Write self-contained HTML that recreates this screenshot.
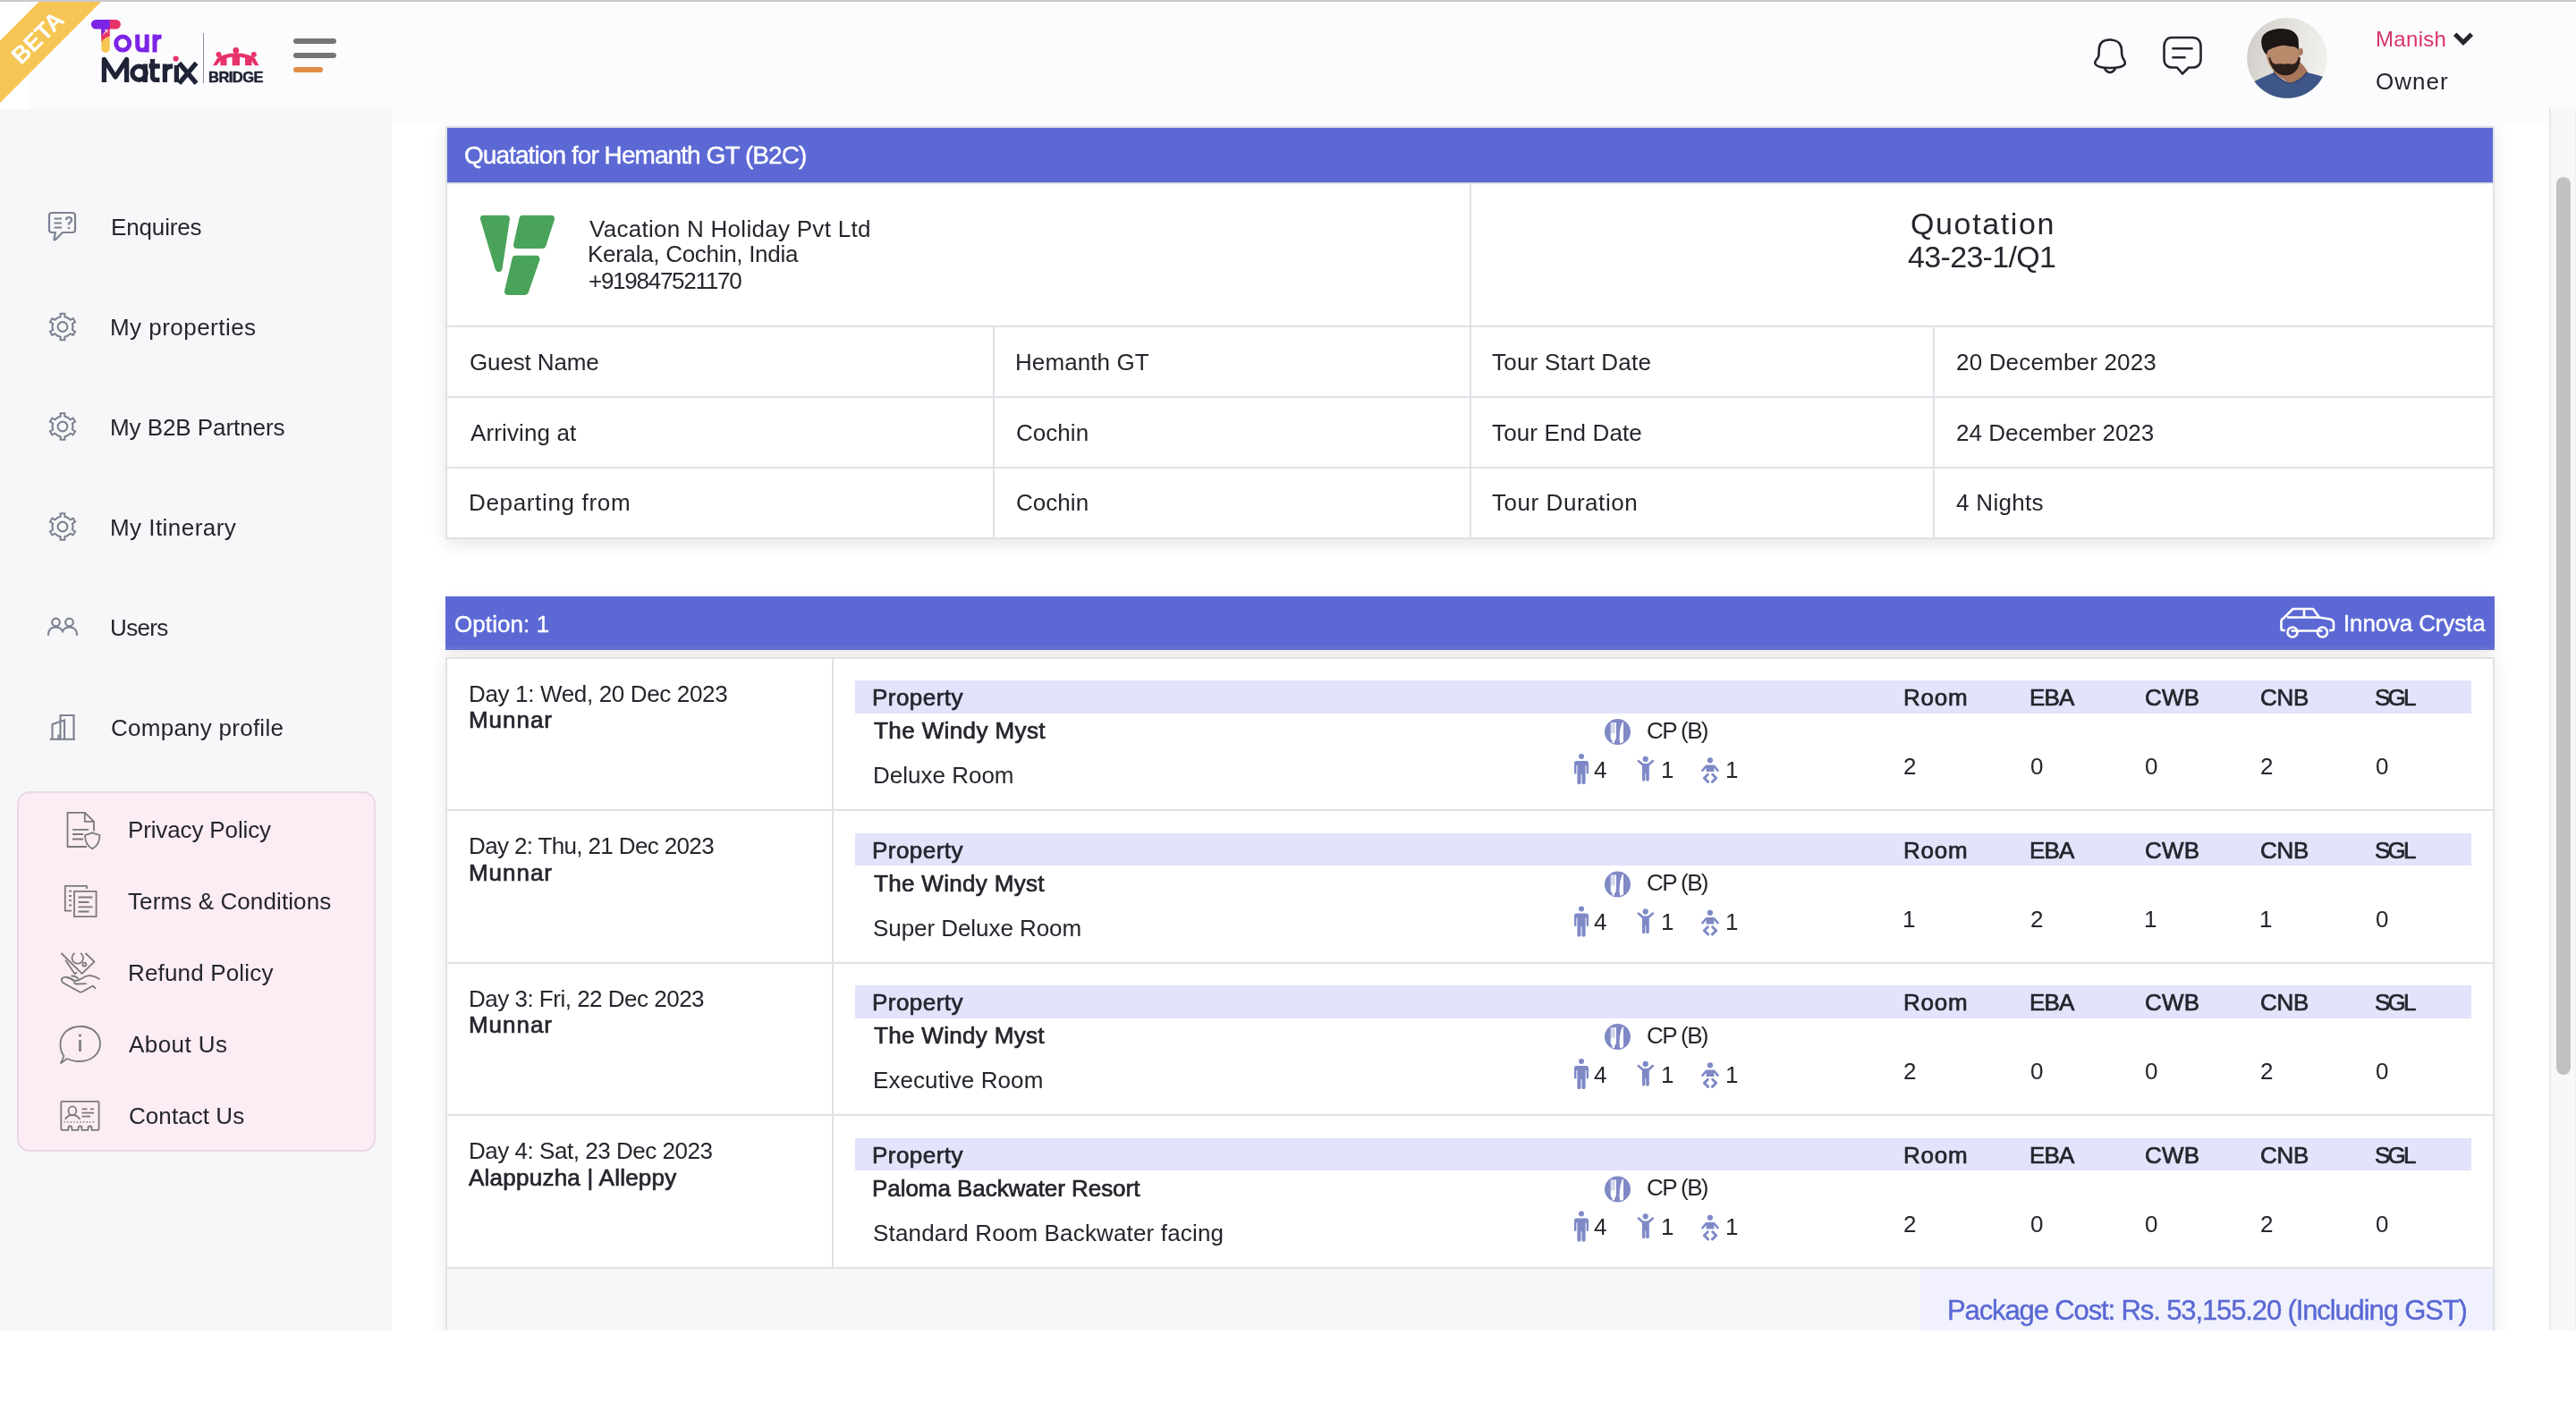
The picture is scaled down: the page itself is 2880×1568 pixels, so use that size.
<!DOCTYPE html><html><head><meta charset="utf-8"><title>Tour Matrix - Quotation</title><style>
html,body{margin:0;padding:0;width:2880px;height:1568px;overflow:hidden;background:#fff;font-family:"Liberation Sans",sans-serif;}
.t{position:absolute;line-height:0;white-space:nowrap;will-change:transform;}
svg text{font-family:"Liberation Sans",sans-serif;}
</style></head><body>
<div style="position:absolute;left:0px;top:0px;width:2880px;height:2px;background:#c8cacd;"></div>
<div style="position:absolute;left:0px;top:2px;width:2880px;height:120px;background:#fcfcfe;"></div>
<div style="position:absolute;left:0px;top:122px;width:438px;height:1366px;background:#f7f7f9;"></div>
<div style="position:absolute;left:2850px;top:121px;width:30px;height:1367px;background:#f8f8f8;box-sizing:border-box;border-left:2px solid #e8e8e8;border-right:1px solid #efefef;"></div>
<div style="position:absolute;left:2858px;top:198px;width:16px;height:1004px;background:#c1c1c1;border-radius:8px;"></div>
<div style="position:absolute;left:0px;top:2px;width:32px;height:120px;background:#ffffff;"></div>
<svg style="position:absolute;left:0px;top:2px;overflow:visible;overflow:hidden;" width="200" height="120" viewBox="0 0 200 120"><polygon points="43.5,0 113,0 0,113 0,43.5" fill="#f5c653"/><text x="42.4" y="49" transform="rotate(-45 42.4 40.4)" text-anchor="middle" font-size="26.5" font-weight="700" fill="#fff" letter-spacing="0">BETA</text></svg>
<svg style="position:absolute;left:0px;top:0px;overflow:visible;" width="300" height="122" viewBox="0 0 300 122">
<path d="M107.2 21.9 H123 V32.5 H107.2 A5.3 5.3 0 0 1 107.2 21.9 Z" fill="#7b24e6"/>
<path d="M122.7 21.9 H129.6 A5.3 5.3 0 0 1 129.6 32.5 H122.7 Z" fill="#e8336a"/>
<path d="M113.3 32 H122.7 V54.3 A4.7 4.7 0 0 1 113.3 54.3 Z" fill="#f5c451"/>
<path d="M113.3 32 H122.7 V40.5 Q116 42 113.3 47 Z" fill="#e8336a"/>
<path d="M113.3 32 H120.5 Q117 35 113.3 40 Z" fill="#7b24e6"/>
<path d="M115.5 38.5 L119.8 33.6 M117 33.8 H119.9 V36.6" stroke="#fcfcfe" stroke-width="1" fill="none"/>
<g fill="none" stroke="#7b24e6" stroke-width="5">
<circle cx="137.2" cy="48.6" r="7.5"/>
<path d="M153.7 38.6 V50.5 Q153.7 56.1 159 56.1 Q164.2 56.1 164.2 50.5 M164.2 38.6 V58.6"/>
<path d="M173 38.6 V58.6 M173 47.5 Q173.5 41 180.6 41"/>
</g>
<g fill="none" stroke="#1f2336" stroke-width="5.3" stroke-linejoin="round">
<path d="M116.4 92 V66.5 L129 86 L141.6 66.5 V92"/>
<circle cx="155.6" cy="81.7" r="7.6"/>
<path d="M162.3 71.5 V92"/>
<path d="M170.5 66 V85.5 Q170.5 89.4 174.5 89.4 H178.5 M166.5 74 H178.8"/>
<path d="M184.4 71.5 V92 M184.4 80.5 Q185 74 193.2 74"/>
<path d="M197.4 73 V92"/>
<path d="M202 72.5 L217.8 91.2 M217.8 72.5 L202 91.2" stroke-linecap="square"/>
</g>
<circle cx="196.6" cy="65.6" r="3.1" fill="#e8336a"/>
</svg>
<div style="position:absolute;left:226.8px;top:37.4px;width:1.6px;height:55.4px;background:#8a8fa0;"></div>
<div class="t" style="left:233.40px;top:85.82px;font-size:16.5px;color:#1f2336;font-weight:700;letter-spacing:-0.520px;-webkit-text-stroke:0.5px #1f2336;">BRIDGE</div>
<svg style="position:absolute;left:0px;top:0px;overflow:visible;" width="300" height="122" viewBox="0 0 300 122">
<g fill="#e8336a">
<circle cx="263.8" cy="56.5" r="3.4"/>
<path d="M259.6 60.5 H268 V73.3 H259.6 Z"/>
<circle cx="244.5" cy="61" r="3"/>
<circle cx="283.8" cy="61" r="3"/>
<path d="M238 73.3 L243 65 Q252 59 263.8 59.5 Q276 59 285 65 L289.5 73.3 L285 73.3 L281.5 68 L281.5 73.3 L274 73.3 L274 65 Q264 61.5 253.5 65 L253.5 73.3 L246.5 73.3 L246.5 68 L242 73.3 Z"/>
</g></svg>
<div style="position:absolute;left:328.4px;top:43.2px;width:47.4px;height:6.2px;background:#757575;border-radius:3.1px;"></div>
<div style="position:absolute;left:328.4px;top:59px;width:47.4px;height:6.2px;background:#757575;border-radius:3.1px;"></div>
<div style="position:absolute;left:328.4px;top:74.8px;width:32.2px;height:6px;background:#e08b46;border-radius:3px;"></div>
<svg style="position:absolute;left:0px;top:0px;overflow:visible;" width="2880" height="122" viewBox="0 0 2880 122"><g fill="none" stroke="#24252d" stroke-width="2.6" stroke-linejoin="round" stroke-linecap="round">
<path d="M2342.5 71.5 C2341 69.5 2344.5 66.5 2346 63.5 C2347 61 2346.5 57 2346.8 54 C2347.5 47 2352 44.5 2359 44.5 C2366 44.5 2371 48 2371.8 54 C2372.2 57 2371.8 61 2372.8 63.5 C2374 66.5 2377 69.5 2375.5 72 C2373 75.5 2366 76 2359 76 C2352 76 2344.5 75.5 2342.5 71.5 Z"/>
<path d="M2353 76.5 C2355 80 2357 81 2359 81 C2361 81 2363 80 2365 76.5"/>
</g><path d="M2355 45 Q2359 41.5 2363 45 Z" fill="#24252d"/></svg>
<svg style="position:absolute;left:0px;top:0px;overflow:visible;" width="2880" height="122" viewBox="0 0 2880 122"><g fill="none" stroke="#24252d" stroke-width="2.6" stroke-linejoin="round" stroke-linecap="round">
<path d="M2428 42 H2451 C2457 42 2460.5 46 2460.5 52 V66 C2460.5 72 2457 75.5 2451 75.5 H2447 L2440 82.5 L2434 75.5 H2429 C2423 75.5 2419.5 72 2419.5 66 V52 C2419.5 46 2423 42 2428 42 Z"/>
<path d="M2429.5 54.2 H2450.5"/><path d="M2429.5 64.2 H2442.5"/>
</g></svg>
<svg style="position:absolute;left:0px;top:0px;overflow:visible;" width="2880" height="122" viewBox="0 0 2880 122"><defs><clipPath id="avc"><circle cx="730" cy="700" r="630"/></clipPath>
<linearGradient id="avbg" x1="0" y1="0" x2="1" y2="0.2"><stop offset="0" stop-color="#cdcac4"/><stop offset="0.6" stop-color="#e6e4e0"/><stop offset="1" stop-color="#f2f1ee"/></linearGradient></defs>
<g transform="translate(2505 15) scale(0.07133)"><g clip-path="url(#avc)">
<rect x="0" y="0" width="1472" height="1402" fill="url(#avbg)"/>
<path d="M500 900 Q600 1000 780 1100 Q950 1040 1060 925 Q1000 820 930 760 L800 850 Z" fill="#a77559"/>
<path d="M410 560 Q560 470 760 470 Q880 480 915 560 L935 720 Q930 900 760 950 Q650 975 560 930 Q420 820 400 640 Z" fill="#b9896b"/>
<ellipse cx="945" cy="600" rx="32" ry="58" fill="#a97a5e"/>
<path d="M440 690 Q470 880 600 950 Q700 990 800 955 Q930 885 938 690 L905 690 Q885 790 810 795 Q740 780 690 795 Q630 780 560 795 Q480 790 468 690 Z" fill="#2a1f1a"/>
<path d="M325 440 Q330 270 600 240 Q860 230 905 400 L915 580 Q880 520 800 520 Q760 520 700 500 Q560 500 430 580 L405 650 Q325 560 325 440 Z" fill="#1c1715"/>
<path d="M120 1120 Q250 1040 520 930 Q650 1080 780 1100 Q950 1060 1040 925 Q1200 960 1340 1010 L1500 1450 L0 1450 Z" fill="#3e5688"/>
<path d="M520 930 Q650 1080 780 1100 Q950 1060 1040 925" fill="none" stroke="#33466f" stroke-width="22"/>
</g></g></svg>
<div class="t" style="left:2655.80px;top:43.60px;font-size:24px;color:#d9336b;font-weight:400;letter-spacing:0.320px;">Manish</div>
<svg style="position:absolute;left:0px;top:0px;overflow:visible;" width="2880" height="122" viewBox="0 0 2880 122"><path d="M2746.5 40 L2754 47.5 L2761.5 40" fill="none" stroke="#26272e" stroke-width="5" stroke-linecap="square"/></svg>
<div class="t" style="left:2656.00px;top:90.90px;font-size:26px;color:#25262d;font-weight:400;letter-spacing:1.000px;">Owner</div>
<div class="t" style="left:123.60px;top:254.00px;font-size:26px;color:#25262d;font-weight:400;letter-spacing:-0.143px;">Enquires</div>
<div class="t" style="left:123.00px;top:366.40px;font-size:26px;color:#25262d;font-weight:400;letter-spacing:0.466px;">My properties</div>
<div class="t" style="left:123.00px;top:478.40px;font-size:26px;color:#25262d;font-weight:400;letter-spacing:-0.071px;">My B2B Partners</div>
<div class="t" style="left:123.00px;top:590.40px;font-size:26px;color:#25262d;font-weight:400;letter-spacing:0.455px;">My Itinerary</div>
<div class="t" style="left:122.80px;top:701.90px;font-size:26px;color:#25262d;font-weight:400;letter-spacing:-0.650px;">Users</div>
<div class="t" style="left:123.80px;top:813.70px;font-size:26px;color:#25262d;font-weight:400;letter-spacing:0.256px;">Company profile</div>
<svg style="position:absolute;left:0px;top:0px;overflow:visible;" width="438" height="900" viewBox="0 0 438 900"><g fill="none" stroke="#7c8291" stroke-width="2.2" stroke-linejoin="round">
<path d="M58 238 H81 Q84 238 84 241 V257 Q84 260 81 260 H70 L62 268 Q60 269 60.5 267 L62 260 H58 Q55 260 55 257 V241 Q55 238 58 238 Z"/>
<path d="M60.5 244.5 H69 M60.5 249.5 H69 M60.5 254.5 H69"/>
<path d="M74 246 Q74 243 77 243 Q80 243 80 246 Q80 248.5 77 249.5 V251.5"/>
</g><circle cx="77" cy="255" r="1.3" fill="#7c8291"/><g fill="none" stroke="#7c8291" stroke-width="2.1" stroke-linejoin="miter"><path d="M64.25 355.54 L67.61 354.25 L67.65 350.68 L72.35 350.68 L72.39 354.25 L75.75 355.54 L78.55 357.80 L81.66 356.06 L84.00 360.12 L80.94 361.95 L81.50 365.50 L80.94 369.05 L84.00 370.88 L81.66 374.94 L78.55 373.20 L75.75 375.46 L72.39 376.75 L72.35 380.32 L67.65 380.32 L67.61 376.75 L64.25 375.46 L61.45 373.20 L58.34 374.94 L56.00 370.88 L59.06 369.05 L58.50 365.50 L59.06 361.95 L56.00 360.12 L58.34 356.06 L61.45 357.80 Z"/><circle cx="70" cy="365.5" r="5.4"/></g><g fill="none" stroke="#7c8291" stroke-width="2.1" stroke-linejoin="miter"><path d="M64.25 467.04 L67.61 465.75 L67.65 462.18 L72.35 462.18 L72.39 465.75 L75.75 467.04 L78.55 469.30 L81.66 467.56 L84.00 471.62 L80.94 473.45 L81.50 477.00 L80.94 480.55 L84.00 482.38 L81.66 486.44 L78.55 484.70 L75.75 486.96 L72.39 488.25 L72.35 491.82 L67.65 491.82 L67.61 488.25 L64.25 486.96 L61.45 484.70 L58.34 486.44 L56.00 482.38 L59.06 480.55 L58.50 477.00 L59.06 473.45 L56.00 471.62 L58.34 467.56 L61.45 469.30 Z"/><circle cx="70" cy="477" r="5.4"/></g><g fill="none" stroke="#7c8291" stroke-width="2.1" stroke-linejoin="miter"><path d="M64.25 579.04 L67.61 577.75 L67.65 574.18 L72.35 574.18 L72.39 577.75 L75.75 579.04 L78.55 581.30 L81.66 579.56 L84.00 583.62 L80.94 585.45 L81.50 589.00 L80.94 592.55 L84.00 594.38 L81.66 598.44 L78.55 596.70 L75.75 598.96 L72.39 600.25 L72.35 603.82 L67.65 603.82 L67.61 600.25 L64.25 598.96 L61.45 596.70 L58.34 598.44 L56.00 594.38 L59.06 592.55 L58.50 589.00 L59.06 585.45 L56.00 583.62 L58.34 579.56 L61.45 581.30 Z"/><circle cx="70" cy="589" r="5.4"/></g><g fill="none" stroke="#7c8291" stroke-width="2.2" stroke-linecap="round">
<circle cx="62.5" cy="696" r="4.3"/><circle cx="77.5" cy="696" r="4.3"/>
<path d="M54 710 Q54 701.5 62.5 701.5 Q68 701.5 70 706 Q72 701.5 77.5 701.5 Q86 701.5 86 710"/></g><g fill="none" stroke="#7c8291" stroke-width="2.1">
<path d="M67.5 826.5 V800 H82.5 V826.5"/><path d="M58.5 826.5 V810 L72 805.5 V826.5"/>
<path d="M55.8 826.8 H84"/><path d="M65.5 826.5 V821.5"/></g></svg>
<div style="position:absolute;left:18.8px;top:884.5px;width:401px;height:403px;background:#fcecf4;box-sizing:border-box;border:2px solid #ead9e3;border-radius:14px;"></div>
<div class="t" style="left:143.00px;top:927.90px;font-size:26px;color:#25262d;font-weight:400;letter-spacing:-0.137px;">Privacy Policy</div>
<div class="t" style="left:143.30px;top:1007.90px;font-size:26px;color:#25262d;font-weight:400;letter-spacing:0.107px;">Terms &amp; Conditions</div>
<div class="t" style="left:143.00px;top:1087.90px;font-size:26px;color:#25262d;font-weight:400;letter-spacing:0.166px;">Refund Policy</div>
<div class="t" style="left:143.90px;top:1167.90px;font-size:26px;color:#25262d;font-weight:400;letter-spacing:0.429px;">About Us</div>
<div class="t" style="left:143.70px;top:1247.90px;font-size:26px;color:#25262d;font-weight:400;letter-spacing:0.065px;">Contact Us</div>
<svg style="position:absolute;left:0px;top:0px;overflow:visible;" width="438" height="1300" viewBox="0 0 438 1300"><g fill="none" stroke="#7a7a7a" stroke-width="1.8" stroke-linejoin="round">
<path d="M97 947 H75.5 V908.8 H95 L105 918.8 V929.5"/><path d="M94.8 908.8 V918.8 H105"/>
<path d="M81 927.8 H99 M81 933 H93 M81 938.5 H93"/>
<path d="M103.2 931.3 Q107.5 933 111.5 934 Q111.5 945 103.2 949.3 Q95 945 95 934 Q99 933 103.2 931.3 Z"/>
<path d="M80 1018.6 H72.8 V990.8 H97 V994"/><path d="M77 996.6 H80 M77 1002 H80 M77 1007.2 H80 M77 1012.5 H80"/>
<path d="M83 996.8 H107.6 V1025.2 H83 Z"/>
<path d="M87.5 1003.5 H103.5 M87.5 1009 H99.5 M87.5 1014.3 H103.5 M87.5 1019.5 H99.5"/>
<path d="M68.4 1066 L91.6 1088.8 L105.5 1075.6 L95.5 1066"/>
<path d="M83.5 1066 A6.3 6.3 0 1 0 90.1 1066"/><circle cx="94.3" cy="1078.6" r="2"/>
<path d="M73.2 1073.8 L83.6 1089.2 L86 1087.6"/>
<path d="M111.5 1095.3 Q104 1090.5 98 1091.3 Q94 1092 91.5 1094.3 Q89 1096.5 84 1097"/>
<path d="M84 1097 Q78 1094 74 1093 Q70 1092.5 68.8 1095 Q68.4 1097.5 71 1099.5 L89.2 1109.5 Q90.5 1110 92 1109.3 L102 1103.5 Q103.5 1102.5 105 1103.5 L107 1106"/>
<path d="M82.8 1097.5 Q83 1100.3 85 1100.5 L96.7 1100.2"/>
<path d="M74 1093 Q79 1093 82.5 1097.2 M79.5 1091.5 Q84.5 1091.2 88 1095"/>
<path d="M90 1148 C104 1148 112 1157 112 1167 C112 1178 103 1187 89 1187 C83 1187 79 1186 75 1184 L68 1189 L71.5 1181 C69 1178 67.5 1173 67.5 1168 C67.5 1157 76 1148 90 1148 Z"/>
<path d="M89.5 1163 V1176" stroke-width="2.6"/>
<path d="M69.3 1231.8 H109.6 Q110.6 1231.8 110.6 1232.8 V1262.8 Q110.6 1263.8 109.6 1263.8 H102.5 V1261.5 A2 2 0 0 0 98.5 1261.5 V1263.8 H91.5 V1261.5 A2 2 0 0 0 87.5 1261.5 V1263.8 H80.4 V1261.5 A2 2 0 0 0 76.4 1261.5 V1263.8 H69.3 Q68.3 1263.8 68.3 1262.8 V1232.8 Q68.3 1231.8 69.3 1231.8 Z"/>
<ellipse cx="80.9" cy="1242.3" rx="4.4" ry="5"/><path d="M72.8 1251.8 Q76 1247 80.9 1247 Q86 1247 89.5 1251.8"/>
<path d="M91.5 1240.4 H97.5 M101 1240.4 H105 M91.5 1244.6 H105 M91.5 1248.6 H101"/>
<path d="M71.5 1254.8 H107.5" stroke-dasharray="1.2 2.4"/>
</g><circle cx="89.5" cy="1158" r="1.6" fill="#7a7a7a"/></svg>
<div style="position:absolute;left:498px;top:141px;width:2291px;height:462px;background:#fff;box-sizing:border-box;border:2px solid #dee2e6;box-shadow:0 5px 18px rgba(0,0,0,0.10);"></div>
<div style="position:absolute;left:500px;top:143px;width:2287px;height:61px;background:#5c69d4;"></div>
<div style="position:absolute;left:500px;top:204px;width:2287px;height:2px;background:#dee2e6;"></div>
<div class="t" style="left:519.00px;top:174.20px;font-size:28px;color:#fff;font-weight:400;-webkit-text-stroke:0.4px #fff;letter-spacing:-0.931px;">Quatation for Hemanth GT (B2C)</div>
<svg style="position:absolute;left:0px;top:0px;overflow:visible;" width="2880" height="400" viewBox="0 0 2880 400"><g fill="#4aa35b" stroke="#4aa35b" stroke-width="8" stroke-linejoin="round"><polygon points="541,244.7 566,244.7 557.6,300"/><polygon points="584.5,244.7 616,244.7 606.5,274 578,274"/><polygon points="576.5,289.8 599.5,289.8 587,326 568,326"/></g></svg>
<div class="t" style="left:659.00px;top:255.90px;font-size:26px;color:#25262d;font-weight:400;letter-spacing:0.280px;">Vacation N Holiday Pvt Ltd</div>
<div class="t" style="left:657.00px;top:284.40px;font-size:26px;color:#25262d;font-weight:400;letter-spacing:-0.300px;">Kerala, Cochin, India</div>
<div class="t" style="left:658.00px;top:313.90px;font-size:26px;color:#25262d;font-weight:400;letter-spacing:-1.265px;">+919847521170</div>
<div class="t" style="left:2136.00px;top:249.60px;font-size:34px;color:#25262d;font-weight:400;letter-spacing:1.625px;">Quotation</div>
<div class="t" style="left:2133.00px;top:287.10px;font-size:34px;color:#25262d;font-weight:400;letter-spacing:-0.667px;">43-23-1/Q1</div>
<div style="position:absolute;left:1643px;top:206px;width:2px;height:158px;background:#dee2e6;"></div>
<div style="position:absolute;left:500px;top:364px;width:2287px;height:2px;background:#dee2e6;"></div>
<div style="position:absolute;left:500px;top:443px;width:2287px;height:2px;background:#dee2e6;"></div>
<div style="position:absolute;left:500px;top:522px;width:2287px;height:2px;background:#dee2e6;"></div>
<div style="position:absolute;left:1110px;top:366px;width:2px;height:235px;background:#dee2e6;"></div>
<div style="position:absolute;left:1643px;top:366px;width:2px;height:235px;background:#dee2e6;"></div>
<div style="position:absolute;left:2161px;top:366px;width:2px;height:235px;background:#dee2e6;"></div>
<div class="t" style="left:524.60px;top:404.80px;font-size:26px;color:#25262d;font-weight:400;letter-spacing:-0.134px;">Guest Name</div>
<div class="t" style="left:1135.20px;top:404.80px;font-size:26px;color:#25262d;font-weight:400;letter-spacing:0.088px;">Hemanth GT</div>
<div class="t" style="left:1668.00px;top:404.80px;font-size:26px;color:#25262d;font-weight:400;letter-spacing:0.215px;">Tour Start Date</div>
<div class="t" style="left:2186.80px;top:404.80px;font-size:26px;color:#25262d;font-weight:400;letter-spacing:0.174px;">20 December 2023</div>
<div class="t" style="left:525.60px;top:483.60px;font-size:26px;color:#25262d;font-weight:400;letter-spacing:0.120px;">Arriving at</div>
<div class="t" style="left:1136.20px;top:483.60px;font-size:26px;color:#25262d;font-weight:400;letter-spacing:0.040px;">Cochin</div>
<div class="t" style="left:1668.00px;top:483.60px;font-size:26px;color:#25262d;font-weight:400;letter-spacing:0.134px;">Tour End Date</div>
<div class="t" style="left:2186.80px;top:483.60px;font-size:26px;color:#25262d;font-weight:400;letter-spacing:0.011px;">24 December 2023</div>
<div class="t" style="left:523.60px;top:562.40px;font-size:26px;color:#25262d;font-weight:400;letter-spacing:0.662px;">Departing from</div>
<div class="t" style="left:1136.20px;top:562.40px;font-size:26px;color:#25262d;font-weight:400;letter-spacing:0.040px;">Cochin</div>
<div class="t" style="left:1668.00px;top:562.40px;font-size:26px;color:#25262d;font-weight:400;letter-spacing:0.551px;">Tour Duration</div>
<div class="t" style="left:2186.80px;top:562.40px;font-size:26px;color:#25262d;font-weight:400;letter-spacing:0.316px;">4 Nights</div>
<div style="position:absolute;left:438px;top:122px;width:2412px;height:17px;background:#fcfcfe;"></div>
<div style="position:absolute;left:498px;top:667px;width:2291px;height:60px;background:linear-gradient(#5c69d4 0,#5c69d4 53px,#6c76d8 60px);box-shadow:0 3px 12px rgba(0,0,0,0.07);"></div>
<div class="t" style="left:508.00px;top:697.90px;font-size:26px;color:#fff;font-weight:400;-webkit-text-stroke:0.4px #fff;letter-spacing:0.074px;">Option: 1</div>
<svg style="position:absolute;left:0px;top:0px;overflow:visible;" width="2880" height="800" viewBox="0 0 2880 800"><g fill="none" stroke="#fff" stroke-width="2.6" stroke-linejoin="round"><path d="M2555 705 H2552 Q2550.5 705 2550.5 703 V695 Q2550.5 692.5 2553 691.5 L2563.5 681 H2586 L2593 690.5 L2605 692.5 Q2609 693.5 2609 697 V703 Q2609 705 2607 705 H2604"/><path d="M2561.5 705.5 H2596.5"/><path d="M2557 690.5 H2593"/><path d="M2576 681 V690.5"/><circle cx="2563" cy="707" r="5.5"/><circle cx="2596.5" cy="707" r="5.5"/></g></svg>
<div class="t" style="left:2619.80px;top:697.30px;font-size:26px;color:#fff;font-weight:400;-webkit-text-stroke:0.4px #fff;letter-spacing:-0.150px;">Innova Crysta</div>
<div style="position:absolute;left:498px;top:735px;width:2291px;height:800px;background:#fff;box-sizing:border-box;border:2px solid #dee2e6;box-shadow:0 0 18px rgba(0,0,0,0.09);"></div>
<div style="position:absolute;left:930px;top:737px;width:2px;height:681px;background:#dee2e6;"></div>
<div style="position:absolute;left:500px;top:905px;width:2287px;height:2px;background:#dee2e6;"></div>
<div style="position:absolute;left:500px;top:1075.5px;width:2287px;height:2px;background:#dee2e6;"></div>
<div style="position:absolute;left:500px;top:1246px;width:2287px;height:2px;background:#dee2e6;"></div>
<div style="position:absolute;left:500px;top:1417px;width:2287px;height:2px;background:#dee2e6;"></div>
<div style="position:absolute;left:500px;top:1419px;width:1646px;height:70px;background:#f8f8f9;"></div>
<div style="position:absolute;left:2146px;top:1419px;width:641px;height:70px;background:#f0f1fc;"></div>
<div class="t" style="left:2176.50px;top:1465.75px;font-size:31px;color:#5a68d4;font-weight:400;-webkit-text-stroke:0.4px #5a68d4;letter-spacing:-1.119px;">Package Cost: Rs. 53,155.20 (Including GST)</div>
<div class="t" style="left:524.20px;top:775.90px;font-size:26px;color:#25262d;font-weight:400;letter-spacing:-0.344px;">Day 1: Wed, 20 Dec 2023</div>
<div class="t" style="left:524.20px;top:805.40px;font-size:26px;color:#25262d;font-weight:400;-webkit-text-stroke:0.7px #25262d;letter-spacing:0.960px;">Munnar</div>
<div style="position:absolute;left:956px;top:761.2px;width:1807px;height:36.6px;background:#e2e4fb;"></div>
<div class="t" style="left:975.30px;top:780.20px;font-size:26px;color:#25262d;font-weight:400;-webkit-text-stroke:0.7px #25262d;letter-spacing:0.459px;">Property</div>
<div class="t" style="left:2127.60px;top:780.20px;font-size:26px;color:#25262d;font-weight:400;-webkit-text-stroke:0.7px #25262d;letter-spacing:0.799px;">Room</div>
<div class="t" style="left:2269.40px;top:780.20px;font-size:26px;color:#25262d;font-weight:400;-webkit-text-stroke:0.7px #25262d;letter-spacing:-0.900px;">EBA</div>
<div class="t" style="left:2397.60px;top:780.20px;font-size:26px;color:#25262d;font-weight:400;-webkit-text-stroke:0.7px #25262d;letter-spacing:0.200px;">CWB</div>
<div class="t" style="left:2526.60px;top:780.20px;font-size:26px;color:#25262d;font-weight:400;-webkit-text-stroke:0.7px #25262d;letter-spacing:-0.300px;">CNB</div>
<div class="t" style="left:2655.10px;top:780.20px;font-size:26px;color:#25262d;font-weight:400;-webkit-text-stroke:0.7px #25262d;letter-spacing:-2.800px;">SGL</div>
<div class="t" style="left:977.30px;top:817.40px;font-size:26px;color:#25262d;font-weight:400;-webkit-text-stroke:0.7px #25262d;letter-spacing:0.401px;">The Windy Myst</div>
<div class="t" style="left:975.50px;top:867.40px;font-size:26px;color:#25262d;font-weight:400;letter-spacing:0.000px;">Deluxe Room</div>
<div class="t" style="left:2127.90px;top:857.00px;font-size:26px;color:#25262d;font-weight:400;letter-spacing:4.000px;">2</div>
<div class="t" style="left:2269.70px;top:857.00px;font-size:26px;color:#25262d;font-weight:400;letter-spacing:-4.000px;">0</div>
<div class="t" style="left:2397.60px;top:857.00px;font-size:26px;color:#25262d;font-weight:400;letter-spacing:-4.000px;">0</div>
<div class="t" style="left:2527.30px;top:857.00px;font-size:26px;color:#25262d;font-weight:400;letter-spacing:4.000px;">2</div>
<div class="t" style="left:2655.50px;top:857.00px;font-size:26px;color:#25262d;font-weight:400;letter-spacing:-4.000px;">0</div>
<div class="t" style="left:1841.00px;top:816.90px;font-size:26px;color:#25262d;font-weight:400;letter-spacing:-1.600px;">CP (B)</div>
<div class="t" style="left:1782.00px;top:860.90px;font-size:26px;color:#25262d;font-weight:400;letter-spacing:0.000px;">4</div>
<div class="t" style="left:1857.00px;top:860.90px;font-size:26px;color:#25262d;font-weight:400;letter-spacing:-32.000px;">1</div>
<div class="t" style="left:1929.00px;top:860.90px;font-size:26px;color:#25262d;font-weight:400;letter-spacing:-32.000px;">1</div>
<svg style="position:absolute;left:0px;top:0px;overflow:visible;" width="2880" height="1568" viewBox="0 0 2880 1568"><g transform="translate(0 0.0)"><circle cx="1808.5" cy="818.4" r="14.5" fill="#7f89c6"/><path d="M1800.7 808 H1806.9 V825 Q1806.5 827.5 1805 829 V831 H1802.6 V828.6 Q1800.9 827 1800.7 825 Z" fill="#fff"/><path d="M1802.1 808 V820 M1804.5 808 V820" stroke="#a9aedb" stroke-width="1.1"/><path d="M1815 807.3 V829.8 Q1813.6 831.2 1811.2 831.2 L1810.5 826 Q1810.8 814 1813.6 808 Z" fill="#fff"/><g fill="#7f89c6"><circle cx="1768" cy="846" r="3"/><path d="M1762.5 851 Q1760 851 1760 853.5 V864.5 Q1760 865.5 1761.2 865.5 Q1762.4 865.5 1762.4 864.5 V856 H1763.4 V875.5 Q1763.4 877.3 1765.5 877.3 Q1767.5 877.3 1767.5 875.5 V866 H1768.5 V875.5 Q1768.5 877.3 1770.5 877.3 Q1772.6 877.3 1772.6 875.5 V856 H1773.6 V864.5 Q1773.6 865.5 1774.8 865.5 Q1776 865.5 1776 864.5 V853.5 Q1776 851 1773.5 851 Z"/><circle cx="1839.7" cy="848.9" r="3.1"/><path d="M1830.2 851.2 L1836 856.5 V872 Q1836 873.8 1837.6 873.8 Q1839.4 873.8 1839.4 872 V865 H1840.2 V872 Q1840.2 873.8 1842 873.8 Q1843.8 873.8 1843.8 872 V856.5 L1849.5 851.2 L1847.8 849.4 L1842.3 854 H1837.3 L1831.8 849.4 Z"/><circle cx="1911.9" cy="850.3" r="3.1"/><path d="M1908 855.4 H1916 Q1917 855.4 1917.5 856.3 L1921.7 861 Q1922.3 862.2 1921.2 862.8 Q1920.3 863.3 1919.5 862.4 L1916.3 858.8 V862.9 H1907.6 V858.8 L1904.4 862.4 Q1903.6 863.3 1902.7 862.8 Q1901.6 862.2 1902.3 861 L1906.5 856.3 Q1907 855.4 1908 855.4 Z"/><path d="M1909.3 866.3 L1905.3 870.2 L1909.6 874.4 M1914.7 866.3 L1918.7 870.2 L1914.4 874.4" fill="none" stroke="#7f89c6" stroke-width="3" stroke-linecap="round" stroke-linejoin="round"/></g></g></svg>
<div class="t" style="left:524.20px;top:946.40px;font-size:26px;color:#25262d;font-weight:400;letter-spacing:-0.636px;">Day 2: Thu, 21 Dec 2023</div>
<div class="t" style="left:524.20px;top:975.90px;font-size:26px;color:#25262d;font-weight:400;-webkit-text-stroke:0.7px #25262d;letter-spacing:0.960px;">Munnar</div>
<div style="position:absolute;left:956px;top:931.7px;width:1807px;height:36.6px;background:#e2e4fb;"></div>
<div class="t" style="left:975.30px;top:950.70px;font-size:26px;color:#25262d;font-weight:400;-webkit-text-stroke:0.7px #25262d;letter-spacing:0.459px;">Property</div>
<div class="t" style="left:2127.60px;top:950.70px;font-size:26px;color:#25262d;font-weight:400;-webkit-text-stroke:0.7px #25262d;letter-spacing:0.799px;">Room</div>
<div class="t" style="left:2269.40px;top:950.70px;font-size:26px;color:#25262d;font-weight:400;-webkit-text-stroke:0.7px #25262d;letter-spacing:-0.900px;">EBA</div>
<div class="t" style="left:2397.60px;top:950.70px;font-size:26px;color:#25262d;font-weight:400;-webkit-text-stroke:0.7px #25262d;letter-spacing:0.200px;">CWB</div>
<div class="t" style="left:2526.60px;top:950.70px;font-size:26px;color:#25262d;font-weight:400;-webkit-text-stroke:0.7px #25262d;letter-spacing:-0.300px;">CNB</div>
<div class="t" style="left:2655.10px;top:950.70px;font-size:26px;color:#25262d;font-weight:400;-webkit-text-stroke:0.7px #25262d;letter-spacing:-2.800px;">SGL</div>
<div class="t" style="left:977.30px;top:987.90px;font-size:26px;color:#25262d;font-weight:400;-webkit-text-stroke:0.7px #25262d;letter-spacing:0.324px;">The Windy Myst</div>
<div class="t" style="left:975.50px;top:1037.90px;font-size:26px;color:#25262d;font-weight:400;letter-spacing:-0.063px;">Super Deluxe Room</div>
<div class="t" style="left:2126.90px;top:1027.50px;font-size:26px;color:#25262d;font-weight:400;letter-spacing:-32.000px;">1</div>
<div class="t" style="left:2269.70px;top:1027.50px;font-size:26px;color:#25262d;font-weight:400;letter-spacing:4.000px;">2</div>
<div class="t" style="left:2396.60px;top:1027.50px;font-size:26px;color:#25262d;font-weight:400;letter-spacing:-32.000px;">1</div>
<div class="t" style="left:2526.30px;top:1027.50px;font-size:26px;color:#25262d;font-weight:400;letter-spacing:-32.000px;">1</div>
<div class="t" style="left:2655.50px;top:1027.50px;font-size:26px;color:#25262d;font-weight:400;letter-spacing:-4.000px;">0</div>
<div class="t" style="left:1841.00px;top:987.40px;font-size:26px;color:#25262d;font-weight:400;letter-spacing:-1.600px;">CP (B)</div>
<div class="t" style="left:1782.00px;top:1031.40px;font-size:26px;color:#25262d;font-weight:400;letter-spacing:0.000px;">4</div>
<div class="t" style="left:1857.00px;top:1031.40px;font-size:26px;color:#25262d;font-weight:400;letter-spacing:-32.000px;">1</div>
<div class="t" style="left:1929.00px;top:1031.40px;font-size:26px;color:#25262d;font-weight:400;letter-spacing:-32.000px;">1</div>
<svg style="position:absolute;left:0px;top:0px;overflow:visible;" width="2880" height="1568" viewBox="0 0 2880 1568"><g transform="translate(0 170.5)"><circle cx="1808.5" cy="818.4" r="14.5" fill="#7f89c6"/><path d="M1800.7 808 H1806.9 V825 Q1806.5 827.5 1805 829 V831 H1802.6 V828.6 Q1800.9 827 1800.7 825 Z" fill="#fff"/><path d="M1802.1 808 V820 M1804.5 808 V820" stroke="#a9aedb" stroke-width="1.1"/><path d="M1815 807.3 V829.8 Q1813.6 831.2 1811.2 831.2 L1810.5 826 Q1810.8 814 1813.6 808 Z" fill="#fff"/><g fill="#7f89c6"><circle cx="1768" cy="846" r="3"/><path d="M1762.5 851 Q1760 851 1760 853.5 V864.5 Q1760 865.5 1761.2 865.5 Q1762.4 865.5 1762.4 864.5 V856 H1763.4 V875.5 Q1763.4 877.3 1765.5 877.3 Q1767.5 877.3 1767.5 875.5 V866 H1768.5 V875.5 Q1768.5 877.3 1770.5 877.3 Q1772.6 877.3 1772.6 875.5 V856 H1773.6 V864.5 Q1773.6 865.5 1774.8 865.5 Q1776 865.5 1776 864.5 V853.5 Q1776 851 1773.5 851 Z"/><circle cx="1839.7" cy="848.9" r="3.1"/><path d="M1830.2 851.2 L1836 856.5 V872 Q1836 873.8 1837.6 873.8 Q1839.4 873.8 1839.4 872 V865 H1840.2 V872 Q1840.2 873.8 1842 873.8 Q1843.8 873.8 1843.8 872 V856.5 L1849.5 851.2 L1847.8 849.4 L1842.3 854 H1837.3 L1831.8 849.4 Z"/><circle cx="1911.9" cy="850.3" r="3.1"/><path d="M1908 855.4 H1916 Q1917 855.4 1917.5 856.3 L1921.7 861 Q1922.3 862.2 1921.2 862.8 Q1920.3 863.3 1919.5 862.4 L1916.3 858.8 V862.9 H1907.6 V858.8 L1904.4 862.4 Q1903.6 863.3 1902.7 862.8 Q1901.6 862.2 1902.3 861 L1906.5 856.3 Q1907 855.4 1908 855.4 Z"/><path d="M1909.3 866.3 L1905.3 870.2 L1909.6 874.4 M1914.7 866.3 L1918.7 870.2 L1914.4 874.4" fill="none" stroke="#7f89c6" stroke-width="3" stroke-linecap="round" stroke-linejoin="round"/></g></g></svg>
<div class="t" style="left:524.20px;top:1116.90px;font-size:26px;color:#25262d;font-weight:400;letter-spacing:-0.500px;">Day 3: Fri, 22 Dec 2023</div>
<div class="t" style="left:524.20px;top:1146.40px;font-size:26px;color:#25262d;font-weight:400;-webkit-text-stroke:0.7px #25262d;letter-spacing:0.960px;">Munnar</div>
<div style="position:absolute;left:956px;top:1102.2px;width:1807px;height:36.6px;background:#e2e4fb;"></div>
<div class="t" style="left:975.30px;top:1121.20px;font-size:26px;color:#25262d;font-weight:400;-webkit-text-stroke:0.7px #25262d;letter-spacing:0.459px;">Property</div>
<div class="t" style="left:2127.60px;top:1121.20px;font-size:26px;color:#25262d;font-weight:400;-webkit-text-stroke:0.7px #25262d;letter-spacing:0.799px;">Room</div>
<div class="t" style="left:2269.40px;top:1121.20px;font-size:26px;color:#25262d;font-weight:400;-webkit-text-stroke:0.7px #25262d;letter-spacing:-0.900px;">EBA</div>
<div class="t" style="left:2397.60px;top:1121.20px;font-size:26px;color:#25262d;font-weight:400;-webkit-text-stroke:0.7px #25262d;letter-spacing:0.200px;">CWB</div>
<div class="t" style="left:2526.60px;top:1121.20px;font-size:26px;color:#25262d;font-weight:400;-webkit-text-stroke:0.7px #25262d;letter-spacing:-0.300px;">CNB</div>
<div class="t" style="left:2655.10px;top:1121.20px;font-size:26px;color:#25262d;font-weight:400;-webkit-text-stroke:0.7px #25262d;letter-spacing:-2.800px;">SGL</div>
<div class="t" style="left:977.30px;top:1158.40px;font-size:26px;color:#25262d;font-weight:400;-webkit-text-stroke:0.7px #25262d;letter-spacing:0.324px;">The Windy Myst</div>
<div class="t" style="left:975.50px;top:1208.40px;font-size:26px;color:#25262d;font-weight:400;letter-spacing:0.076px;">Executive Room</div>
<div class="t" style="left:2127.90px;top:1198.00px;font-size:26px;color:#25262d;font-weight:400;letter-spacing:4.000px;">2</div>
<div class="t" style="left:2269.70px;top:1198.00px;font-size:26px;color:#25262d;font-weight:400;letter-spacing:-4.000px;">0</div>
<div class="t" style="left:2397.60px;top:1198.00px;font-size:26px;color:#25262d;font-weight:400;letter-spacing:-4.000px;">0</div>
<div class="t" style="left:2527.30px;top:1198.00px;font-size:26px;color:#25262d;font-weight:400;letter-spacing:4.000px;">2</div>
<div class="t" style="left:2655.50px;top:1198.00px;font-size:26px;color:#25262d;font-weight:400;letter-spacing:-4.000px;">0</div>
<div class="t" style="left:1841.00px;top:1157.90px;font-size:26px;color:#25262d;font-weight:400;letter-spacing:-1.600px;">CP (B)</div>
<div class="t" style="left:1782.00px;top:1201.90px;font-size:26px;color:#25262d;font-weight:400;letter-spacing:0.000px;">4</div>
<div class="t" style="left:1857.00px;top:1201.90px;font-size:26px;color:#25262d;font-weight:400;letter-spacing:-32.000px;">1</div>
<div class="t" style="left:1929.00px;top:1201.90px;font-size:26px;color:#25262d;font-weight:400;letter-spacing:-32.000px;">1</div>
<svg style="position:absolute;left:0px;top:0px;overflow:visible;" width="2880" height="1568" viewBox="0 0 2880 1568"><g transform="translate(0 341.0)"><circle cx="1808.5" cy="818.4" r="14.5" fill="#7f89c6"/><path d="M1800.7 808 H1806.9 V825 Q1806.5 827.5 1805 829 V831 H1802.6 V828.6 Q1800.9 827 1800.7 825 Z" fill="#fff"/><path d="M1802.1 808 V820 M1804.5 808 V820" stroke="#a9aedb" stroke-width="1.1"/><path d="M1815 807.3 V829.8 Q1813.6 831.2 1811.2 831.2 L1810.5 826 Q1810.8 814 1813.6 808 Z" fill="#fff"/><g fill="#7f89c6"><circle cx="1768" cy="846" r="3"/><path d="M1762.5 851 Q1760 851 1760 853.5 V864.5 Q1760 865.5 1761.2 865.5 Q1762.4 865.5 1762.4 864.5 V856 H1763.4 V875.5 Q1763.4 877.3 1765.5 877.3 Q1767.5 877.3 1767.5 875.5 V866 H1768.5 V875.5 Q1768.5 877.3 1770.5 877.3 Q1772.6 877.3 1772.6 875.5 V856 H1773.6 V864.5 Q1773.6 865.5 1774.8 865.5 Q1776 865.5 1776 864.5 V853.5 Q1776 851 1773.5 851 Z"/><circle cx="1839.7" cy="848.9" r="3.1"/><path d="M1830.2 851.2 L1836 856.5 V872 Q1836 873.8 1837.6 873.8 Q1839.4 873.8 1839.4 872 V865 H1840.2 V872 Q1840.2 873.8 1842 873.8 Q1843.8 873.8 1843.8 872 V856.5 L1849.5 851.2 L1847.8 849.4 L1842.3 854 H1837.3 L1831.8 849.4 Z"/><circle cx="1911.9" cy="850.3" r="3.1"/><path d="M1908 855.4 H1916 Q1917 855.4 1917.5 856.3 L1921.7 861 Q1922.3 862.2 1921.2 862.8 Q1920.3 863.3 1919.5 862.4 L1916.3 858.8 V862.9 H1907.6 V858.8 L1904.4 862.4 Q1903.6 863.3 1902.7 862.8 Q1901.6 862.2 1902.3 861 L1906.5 856.3 Q1907 855.4 1908 855.4 Z"/><path d="M1909.3 866.3 L1905.3 870.2 L1909.6 874.4 M1914.7 866.3 L1918.7 870.2 L1914.4 874.4" fill="none" stroke="#7f89c6" stroke-width="3" stroke-linecap="round" stroke-linejoin="round"/></g></g></svg>
<div class="t" style="left:524.20px;top:1287.40px;font-size:26px;color:#25262d;font-weight:400;letter-spacing:-0.472px;">Day 4: Sat, 23 Dec 2023</div>
<div class="t" style="left:524.30px;top:1316.90px;font-size:26px;color:#25262d;font-weight:400;-webkit-text-stroke:0.7px #25262d;letter-spacing:0.242px;">Alappuzha | Alleppy</div>
<div style="position:absolute;left:956px;top:1272.7px;width:1807px;height:36.6px;background:#e2e4fb;"></div>
<div class="t" style="left:975.30px;top:1291.70px;font-size:26px;color:#25262d;font-weight:400;-webkit-text-stroke:0.7px #25262d;letter-spacing:0.459px;">Property</div>
<div class="t" style="left:2127.60px;top:1291.70px;font-size:26px;color:#25262d;font-weight:400;-webkit-text-stroke:0.7px #25262d;letter-spacing:0.799px;">Room</div>
<div class="t" style="left:2269.40px;top:1291.70px;font-size:26px;color:#25262d;font-weight:400;-webkit-text-stroke:0.7px #25262d;letter-spacing:-0.900px;">EBA</div>
<div class="t" style="left:2397.60px;top:1291.70px;font-size:26px;color:#25262d;font-weight:400;-webkit-text-stroke:0.7px #25262d;letter-spacing:0.200px;">CWB</div>
<div class="t" style="left:2526.60px;top:1291.70px;font-size:26px;color:#25262d;font-weight:400;-webkit-text-stroke:0.7px #25262d;letter-spacing:-0.300px;">CNB</div>
<div class="t" style="left:2655.10px;top:1291.70px;font-size:26px;color:#25262d;font-weight:400;-webkit-text-stroke:0.7px #25262d;letter-spacing:-2.800px;">SGL</div>
<div class="t" style="left:975.30px;top:1328.90px;font-size:26px;color:#25262d;font-weight:400;-webkit-text-stroke:0.7px #25262d;letter-spacing:-0.055px;">Paloma Backwater Resort</div>
<div class="t" style="left:975.50px;top:1378.90px;font-size:26px;color:#25262d;font-weight:400;letter-spacing:0.162px;">Standard Room Backwater facing</div>
<div class="t" style="left:2127.90px;top:1368.50px;font-size:26px;color:#25262d;font-weight:400;letter-spacing:4.000px;">2</div>
<div class="t" style="left:2269.70px;top:1368.50px;font-size:26px;color:#25262d;font-weight:400;letter-spacing:-4.000px;">0</div>
<div class="t" style="left:2397.60px;top:1368.50px;font-size:26px;color:#25262d;font-weight:400;letter-spacing:-4.000px;">0</div>
<div class="t" style="left:2527.30px;top:1368.50px;font-size:26px;color:#25262d;font-weight:400;letter-spacing:4.000px;">2</div>
<div class="t" style="left:2655.50px;top:1368.50px;font-size:26px;color:#25262d;font-weight:400;letter-spacing:-4.000px;">0</div>
<div class="t" style="left:1841.00px;top:1328.40px;font-size:26px;color:#25262d;font-weight:400;letter-spacing:-1.600px;">CP (B)</div>
<div class="t" style="left:1782.00px;top:1372.40px;font-size:26px;color:#25262d;font-weight:400;letter-spacing:0.000px;">4</div>
<div class="t" style="left:1857.00px;top:1372.40px;font-size:26px;color:#25262d;font-weight:400;letter-spacing:-32.000px;">1</div>
<div class="t" style="left:1929.00px;top:1372.40px;font-size:26px;color:#25262d;font-weight:400;letter-spacing:-32.000px;">1</div>
<svg style="position:absolute;left:0px;top:0px;overflow:visible;" width="2880" height="1568" viewBox="0 0 2880 1568"><g transform="translate(0 511.5)"><circle cx="1808.5" cy="818.4" r="14.5" fill="#7f89c6"/><path d="M1800.7 808 H1806.9 V825 Q1806.5 827.5 1805 829 V831 H1802.6 V828.6 Q1800.9 827 1800.7 825 Z" fill="#fff"/><path d="M1802.1 808 V820 M1804.5 808 V820" stroke="#a9aedb" stroke-width="1.1"/><path d="M1815 807.3 V829.8 Q1813.6 831.2 1811.2 831.2 L1810.5 826 Q1810.8 814 1813.6 808 Z" fill="#fff"/><g fill="#7f89c6"><circle cx="1768" cy="846" r="3"/><path d="M1762.5 851 Q1760 851 1760 853.5 V864.5 Q1760 865.5 1761.2 865.5 Q1762.4 865.5 1762.4 864.5 V856 H1763.4 V875.5 Q1763.4 877.3 1765.5 877.3 Q1767.5 877.3 1767.5 875.5 V866 H1768.5 V875.5 Q1768.5 877.3 1770.5 877.3 Q1772.6 877.3 1772.6 875.5 V856 H1773.6 V864.5 Q1773.6 865.5 1774.8 865.5 Q1776 865.5 1776 864.5 V853.5 Q1776 851 1773.5 851 Z"/><circle cx="1839.7" cy="848.9" r="3.1"/><path d="M1830.2 851.2 L1836 856.5 V872 Q1836 873.8 1837.6 873.8 Q1839.4 873.8 1839.4 872 V865 H1840.2 V872 Q1840.2 873.8 1842 873.8 Q1843.8 873.8 1843.8 872 V856.5 L1849.5 851.2 L1847.8 849.4 L1842.3 854 H1837.3 L1831.8 849.4 Z"/><circle cx="1911.9" cy="850.3" r="3.1"/><path d="M1908 855.4 H1916 Q1917 855.4 1917.5 856.3 L1921.7 861 Q1922.3 862.2 1921.2 862.8 Q1920.3 863.3 1919.5 862.4 L1916.3 858.8 V862.9 H1907.6 V858.8 L1904.4 862.4 Q1903.6 863.3 1902.7 862.8 Q1901.6 862.2 1902.3 861 L1906.5 856.3 Q1907 855.4 1908 855.4 Z"/><path d="M1909.3 866.3 L1905.3 870.2 L1909.6 874.4 M1914.7 866.3 L1918.7 870.2 L1914.4 874.4" fill="none" stroke="#7f89c6" stroke-width="3" stroke-linecap="round" stroke-linejoin="round"/></g></g></svg>
<div style="position:absolute;left:0px;top:1488px;width:2880px;height:80px;background:#fff;"></div>
</body></html>
